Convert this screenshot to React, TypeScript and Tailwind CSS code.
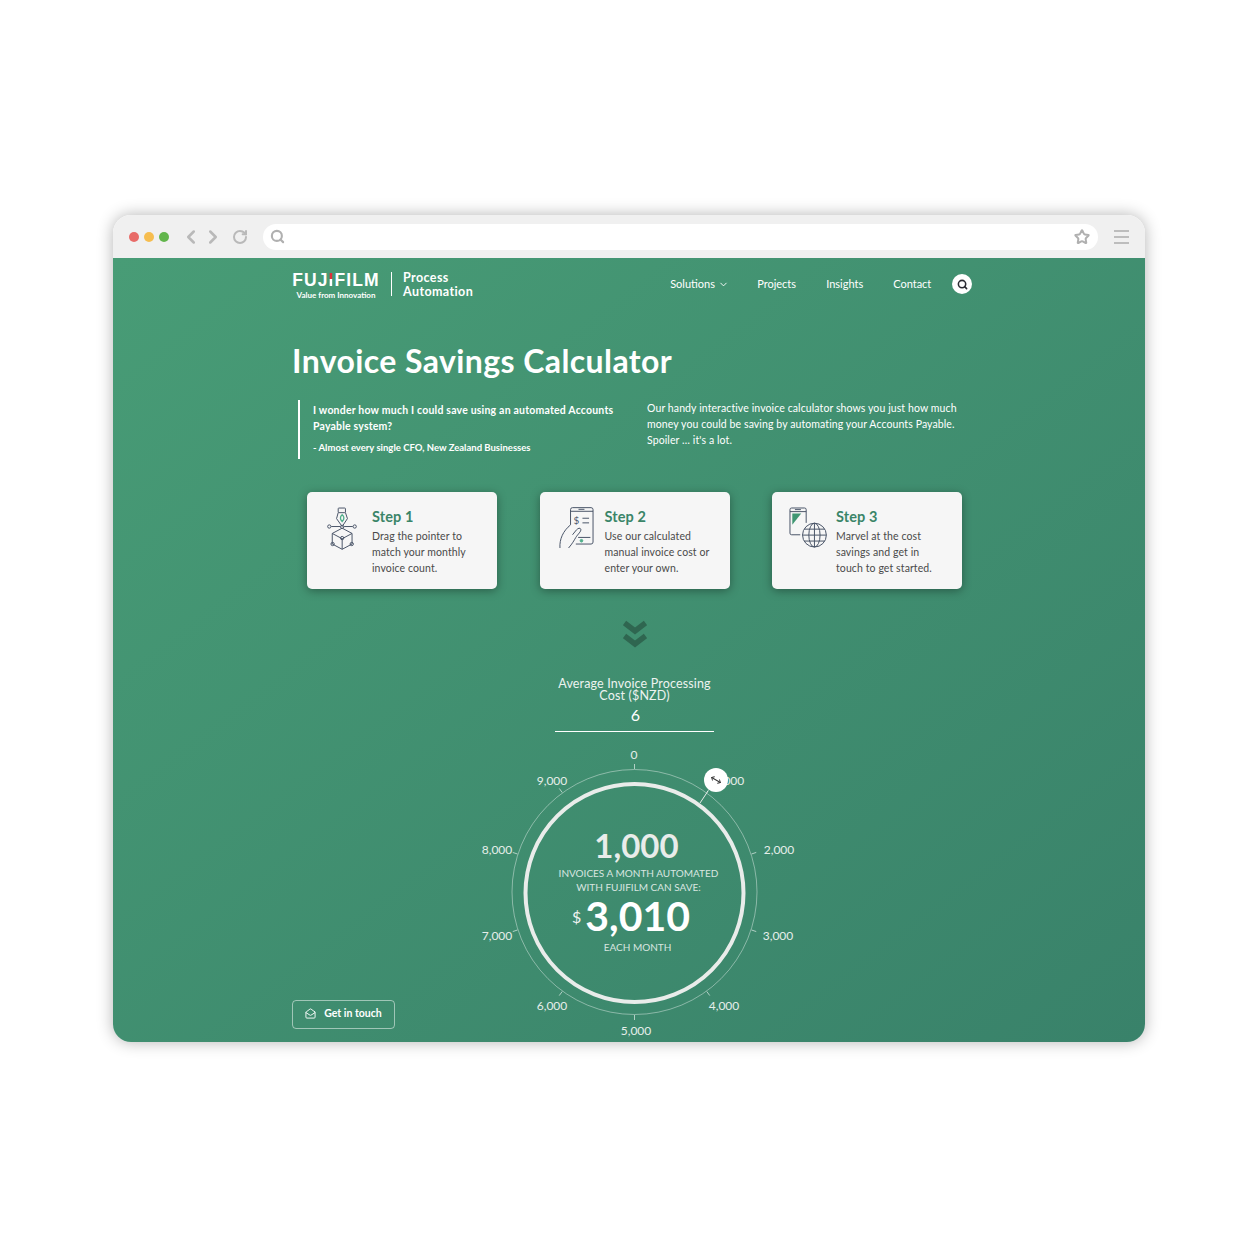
import { ChevronDown, ChevronLeft, ChevronRight, MailOpen, MoveHorizontal, RotateCw, Search, Star } from "lucide-react";

const navItems = ["Projects", "Insights", "Contact"];

const steps = [
  {
    title: "Step 1",
    lines: ["Drag the pointer to", "match your monthly", "invoice count."],
    icon: <PenCubeIcon />,
    iconBox: "w-[65px] shrink-0 pl-[18px] pt-[13px]",
  },
  {
    title: "Step 2",
    lines: ["Use our calculated", "manual invoice cost or", "enter your own."],
    icon: <PhoneHandIcon />,
    iconBox: "w-[65px] shrink-0 pl-[18px] pt-[14px]",
  },
  {
    title: "Step 3",
    lines: ["Marvel at the cost", "savings and get in", "touch to get started."],
    icon: <PhoneGlobeIcon />,
    iconBox: "w-[64px] shrink-0 pl-[15px] pt-[14px]",
  },
];

const dialLabels = [
  { text: "0", className: "left-[164px] top-[10px]" },
  { text: "1,000", className: "left-[259px] top-[36px]" },
  { text: "2,000", className: "left-[309px] top-[105px]" },
  { text: "3,000", className: "left-[308px] top-[191px]" },
  { text: "4,000", className: "left-[254px] top-[261px]" },
  { text: "5,000", className: "left-[166px] top-[286px]" },
  { text: "6,000", className: "left-[82px] top-[261px]" },
  { text: "7,000", className: "left-[27px] top-[191px]" },
  { text: "8,000", className: "left-[27px] top-[105px]" },
  { text: "9,000", className: "left-[82px] top-[36px]" },
];

const ticks = Array.from({ length: 10 }, (_, i) => {
  const a = (i * 36 * Math.PI) / 180;
  return {
    x1: 634.5 + 123 * Math.sin(a),
    y1: 892 - 123 * Math.cos(a),
    x2: 634.5 + 128 * Math.sin(a),
    y2: 892 - 128 * Math.cos(a),
  };
});

function PenCubeIcon() {
  return (
    <svg viewBox="75 60 100 140" className="h-[47px] w-[33px]" fill="none" stroke="#4a5568" strokeWidth="3">
      <rect x="115" y="68" width="22" height="14" rx="2" />
      <path d="M115 82l-5 18 17 24 16-24-6-18" />
      <path d="M127 88c-7 6-7 14 0 21 7-7 7-15 0-21z" stroke="#4fae8a" strokeWidth="4" />
      <path d="M94 124h27M133 124h26" />
      <circle cx="88" cy="124" r="5" />
      <circle cx="165" cy="124" r="5" />
      <circle cx="127" cy="125" r="5" />
      <path d="M97 145l30-16 30 16-30 16zM97 145v32l30 16 30-16v-32M127 161v32" />
      <circle cx="127" cy="159" r="5" />
      <circle cx="98" cy="177" r="5" />
      <circle cx="156" cy="177" r="5" />
    </svg>
  );
}

function PhoneHandIcon() {
  return (
    <svg viewBox="65 65 110 130" className="h-[43px] w-[37px]" fill="none" stroke="#4a5568" strokeWidth="3">
      <path d="M102 122V76a6 6 0 0 1 6-6h56a6 6 0 0 1 6 6v98a6 6 0 0 1-6 6h-46" />
      <path d="M102 81h68M126 75h18" />
      <path d="M138 102h20M138 116h20M125 160h37" />
      <text x="111" y="119" fontSize="30" fill="#4a5568" stroke="none" fontFamily="Lato, sans-serif">$</text>
      <circle cx="135" cy="170" r="4" fill="#4fae8a" stroke="#4fae8a" />
      <path d="M70 192c-2-27 10-52 32-70M96 192c12-14 16-22 22-32 6-10 17-18 15-25-2-5-8-3-13 2l-12 15" />
    </svg>
  );
}

function PhoneGlobeIcon() {
  return (
    <svg viewBox="65 65 125 130" className="h-[43px] w-[42px]" fill="none" stroke="#4a5568" strokeWidth="3">
      <path d="M104 152H78a5 5 0 0 1-5-5V76a5 5 0 0 1 5-5h39a5 5 0 0 1 5 5v40" />
      <path d="M73 82h49M88 76h18" />
      <path d="M80 88h27l-27 34z" fill="#3f9672" stroke="none" />
      <circle cx="147" cy="153" r="36" />
      <ellipse cx="147" cy="153" rx="17" ry="36" />
      <path d="M147 117v72M111 153h72M116 135h62M116 171h62" />
    </svg>
  );
}

function BrowserBar() {
  return (
    <div className="flex h-[43px] items-center bg-[#f0f0f0] pl-[16px] pr-[16px]">
      <div className="flex w-[43px] shrink-0 gap-[5px]">
        <span className="h-[10px] w-[10px] rounded-full bg-[#e86b68]" />
        <span className="h-[10px] w-[10px] rounded-full bg-[#f6bd4f]" />
        <span className="h-[10px] w-[10px] rounded-full bg-[#62b54c]" />
      </div>
      <div className="ml-[12px] flex w-[79px] shrink-0 items-center text-[#b9b9b9]">
        <ChevronLeft className="ml-[-4px] h-[22px] w-[22px]" strokeWidth={2.8} />
        <ChevronRight className="h-[22px] w-[22px]" strokeWidth={2.8} />
        <RotateCw className="ml-[8px] h-[16px] w-[16px]" strokeWidth={3} />
      </div>
      <div className="flex h-[26px] w-[835px] shrink-0 items-center justify-between rounded-full bg-white pl-[7px] pr-[8px] text-[#b0b0b0]">
        <Search className="h-[15px] w-[15px]" strokeWidth={3.4} />
        <Star className="h-[16px] w-[16px]" strokeWidth={3} />
      </div>
      <div className="ml-[16px] flex w-[15px] flex-col gap-[4px]">
        <span className="h-[2px] bg-[#bdbdbd]" />
        <span className="h-[2px] bg-[#bdbdbd]" />
        <span className="h-[2px] bg-[#bdbdbd]" />
      </div>
    </div>
  );
}

function Header() {
  return (
    <header className="flex items-start pt-[13px] text-white">
      <div className="mt-[-1.5px] flex w-[88px] shrink-0 flex-col items-center">
        <div className="font-['Liberation_Sans',sans-serif] text-[17.5px] font-bold leading-[20px] tracking-[1.1px] whitespace-nowrap">
          FUJ<span className="bg-gradient-to-b from-[#e0303a] from-45% to-white to-45% bg-clip-text text-transparent">I</span>FILM
        </div>
        <div className="text-[8px] font-bold leading-[10px] whitespace-nowrap">Value from Innovation</div>
      </div>
      <div className="ml-[11px] mt-[1px] h-[24px] w-px bg-white" />
      <div className="ml-[11px] text-[12.5px] font-bold leading-[14px] tracking-[0.4px]">
        <div>Process</div>
        <div>Automation</div>
      </div>
      <nav className="ml-[197px] mt-[3px] flex items-center text-[11px] leading-[14px]">
        <span className="flex w-[87px] items-center">
          Solutions
          <ChevronDown className="ml-[3px] h-[11px] w-[11px]" />
        </span>
        <span className="w-[69px]">{navItems[0]}</span>
        <span className="w-[67px]">{navItems[1]}</span>
        <span className="w-[59px]">{navItems[2]}</span>
        <span className="flex h-[20px] w-[20px] items-center justify-center rounded-full bg-white text-[#2b2b33]">
          <Search className="h-[11px] w-[11px]" strokeWidth={3.4} />
        </span>
      </nav>
    </header>
  );
}

function Dial() {
  return (
    <section className="relative ml-[178px] h-[297px] w-[330px] text-white">
      <svg viewBox="470 745 330 297" className="absolute inset-0 h-full w-full" fill="none">
        <circle cx="634.5" cy="892" r="122.5" stroke="#ffffff" strokeOpacity="0.4" />
        <circle cx="634.5" cy="893" r="109" stroke="#e9ecea" strokeWidth="4" />
        {ticks.map((t, i) => (
          <line key={i} {...t} stroke="#ffffff" strokeOpacity="0.6" />
        ))}
        <line x1="708" y1="791" x2="700" y2="803" stroke="#e9ecea" />
      </svg>
      {dialLabels.map((l) => (
        <span
          key={l.text}
          className={`absolute -translate-x-1/2 -translate-y-1/2 text-[12px] leading-[14px] text-[#e6eeea] ${l.className}`}
        >
          {l.text}
        </span>
      ))}
      <span className="absolute left-[234px] top-[23px] flex h-[24px] w-[24px] items-center justify-center rounded-full bg-white text-[#333]">
        <MoveHorizontal className="h-[12px] w-[12px] rotate-[30deg]" strokeWidth={1.8} />
      </span>
      <div className="absolute left-[55px] top-[82px] flex w-[228px] flex-col items-center">
        <div className="ml-[-5px] text-[33px] font-bold leading-[36px] text-[#e9ecea]">1,000</div>
        <div className="mt-[3px] ml-[-1px] text-center text-[10px] leading-[14px] text-[#d9e6e0]">
          <div>INVOICES A MONTH AUTOMATED</div>
          <div>WITH FUJIFILM CAN SAVE:</div>
        </div>
        <div className="ml-[-16px] flex items-center">
          <span className="mr-[4px] mt-[1px] text-[16px] leading-[16px] text-[#f0f3f1]">$</span>
          <span className="text-[41px] font-bold leading-[44px]">3,010</span>
        </div>
        <div className="ml-[-3px] mt-[2px] text-[10px] leading-[14px] text-[#d9e6e0]">EACH MONTH</div>
      </div>
    </section>
  );
}

export default function App() {
  return (
    <div className="h-[1258px] w-[1258px] overflow-hidden bg-white pl-[113px] pt-[215px] [font-family:Lato,sans-serif]">
      <div className="relative h-[827px] w-[1032px] overflow-hidden rounded-[18px] shadow-[0_0_16px_rgba(0,0,0,0.3)]">
        <BrowserBar />
        <main className="h-[784px] bg-gradient-to-br from-[#489c76] to-[#39826a] pl-[179px] pt-0">
          <Header />
          <h1 className="mt-[41.5px] text-[32px] font-bold leading-[40px] tracking-[0.4px] text-white">Invoice Savings Calculator</h1>
          <div className="mt-[19px] flex text-[10.5px] leading-[16px] text-white">
            <blockquote className="ml-[6px] h-[59px] w-[349px] shrink-0 border-l-[2px] border-white pl-[13px] pt-[2px] font-bold tracking-[0.2px]">
              <p>
                I wonder how much I could save using an automated Accounts
                <br />
                Payable system?
              </p>
              <p className="mt-[6px] text-[9.5px] tracking-normal">- Almost every single CFO, New Zealand Businesses</p>
            </blockquote>
            <p className="w-[330px] shrink-0 tracking-[0.1px]">
              Our handy interactive invoice calculator shows you just how much
              <br />
              money you could be saving by automating your Accounts Payable.
              <br />
              Spoiler … it's a lot.
            </p>
          </div>
          <div className="ml-[15px] mt-[33px] flex gap-[42.5px]">
            {steps.map((s) => (
              <article
                key={s.title}
                className="flex h-[97px] w-[190px] shrink-0 rounded-[5px] bg-[#f6f6f6] shadow-[0_2px_10px_rgba(0,0,0,0.35)]"
              >
                <div className={s.iconBox}>{s.icon}</div>
                <div className="pt-[15px]">
                  <h2 className="text-[14.5px] font-bold leading-[20px] tracking-[0.1px] text-[#3a8568]">{s.title}</h2>
                  <p className="mt-[2px] text-[10.5px] leading-[15.75px] tracking-[0.1px] text-[#4a4a4a]">
                    {s.lines.map((line) => (
                      <span key={line} className="block whitespace-nowrap">
                        {line}
                      </span>
                    ))}
                  </p>
                </div>
              </article>
            ))}
          </div>
          <div className="ml-[330.5px] mt-[31px]">
            <svg viewBox="0 0 24 28" className="h-[28px] w-[24px]" fill="none" stroke="#2f6650" strokeWidth="5.5">
              <path d="M1.5 3l10.500 8 10.500-8M1.500 16l10.500 8 10.500-8" />
            </svg>
          </div>
          <div className="ml-[263px] mt-[30px] w-[159px] text-center text-white">
            <div className="text-[12.5px] leading-[12px] tracking-[0.15px] text-[#edf3f0]">Average Invoice Processing Cost ($NZD)</div>
            <div className="mt-[2px] border-b border-white pb-[5px] pl-[2px] text-[16px] leading-[22px]">6</div>
          </div>
          <div className="mt-[13px]">
            <Dial />
          </div>
          <button className="absolute left-[179px] top-[785px] flex h-[29px] w-[103px] items-center justify-center gap-[8px] rounded-[4px] border border-white/50 pb-[2px] text-[10.5px] font-bold text-white">
            <MailOpen className="h-[11px] w-[11px]" />
            Get in touch
          </button>
        </main>
      </div>
    </div>
  );
}
